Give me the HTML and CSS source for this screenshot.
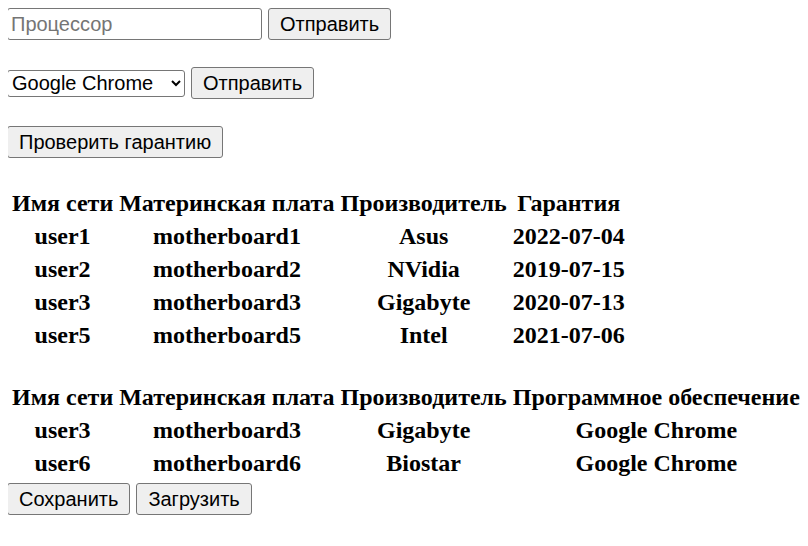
FILE: index.html
```html
<!DOCTYPE html>
<html>
<head>
<meta charset="utf-8">
<link rel="stylesheet" href="styles.css">
</head>
<body>
<div class="controls">
  <form class="row">
    <input class="field" type="text" placeholder="Процессор">
    <button class="btn" type="button">Отправить</button>
  </form>
  <form class="row">
    <select class="sel"><option>Google Chrome</option></select>
    <button class="btn" type="button">Отправить</button>
  </form>
  <form class="row">
    <button class="btn" type="button">Проверить гарантию</button>
  </form>
</div>
<table class="tbl first">
  <tr><th>Имя сети</th><th>Материнская плата</th><th>Производитель</th><th>Гарантия</th></tr>
  <tr><td>user1</td><td>motherboard1</td><td>Asus</td><td>2022-07-04</td></tr>
  <tr><td>user2</td><td>motherboard2</td><td>NVidia</td><td>2019-07-15</td></tr>
  <tr><td>user3</td><td>motherboard3</td><td>Gigabyte</td><td>2020-07-13</td></tr>
  <tr><td>user5</td><td>motherboard5</td><td>Intel</td><td>2021-07-06</td></tr>
</table>
<table class="tbl second">
  <tr><th>Имя сети</th><th>Материнская плата</th><th>Производитель</th><th>Программное обеспечение</th></tr>
  <tr><td>user3</td><td>motherboard3</td><td>Gigabyte</td><td>Google Chrome</td></tr>
  <tr><td>user6</td><td>motherboard6</td><td>Biostar</td><td>Google Chrome</td></tr>
</table>
<div class="row bottom">
  <button class="btn" type="button">Сохранить</button>
  <button class="btn" type="button">Загрузить</button>
</div>
</body>
</html>
```
FILE: styles.css
```css
html, body {
  background: #ffffff;
}
body {
  margin: 8px;
  font-family: "Liberation Serif", serif;
  color: #000;
}
.controls {
  display: flex;
  flex-direction: column;
  gap: 27px;
  margin-left: -1px;
}
.row {
  display: flex;
  align-items: center;
  gap: 6px;
  margin: 0;
}
.bottom {
  margin-left: -1px;
  margin-top: 2px;
}
.field {
  box-sizing: border-box;
  width: 255px;
  height: 32px;
  margin: 0;
  padding: 0 3px;
  border: 1px solid #767676;
  border-radius: 3px;
  font-family: "Liberation Sans", Arial, sans-serif;
  font-size: 20px;
  color: #000;
  background: #fff;
}
.field::placeholder {
  color: #757575;
}
.sel {
  box-sizing: border-box;
  width: 178px;
  height: 27px;
  margin: 0;
  border: 1px solid #767676;
  border-radius: 3px;
  font-family: "Liberation Sans", Arial, sans-serif;
  font-size: 20px;
  color: #000;
  background: #fff;
}
.btn {
  box-sizing: border-box;
  height: 32px;
  margin: 0;
  padding: 0 11px;
  border: 1px solid #767676;
  border-radius: 3px;
  background: #efefef;
  font-family: "Liberation Sans", Arial, sans-serif;
  font-size: 20px;
  color: #000;
}
.tbl {
  border-spacing: 2px;
  font-size: 24px;
  font-weight: bold;
}
.tbl th, .tbl td {
  padding: 2px 2px;
  text-align: center;
  line-height: 27px;
  white-space: nowrap;
}
.first {
  margin-top: 28px;
}
.second {
  margin-top: 27px;
}
```
